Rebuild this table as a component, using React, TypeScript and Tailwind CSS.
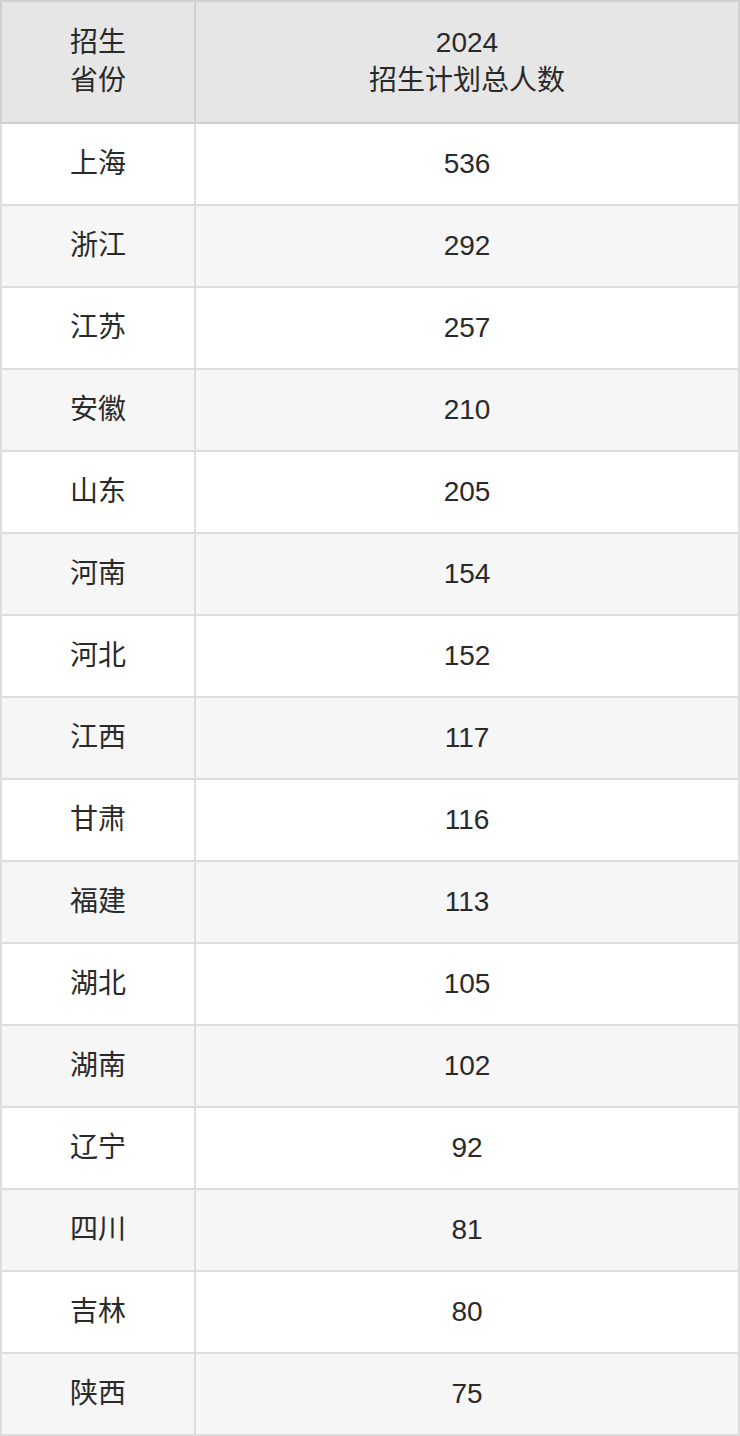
import React from "react";

const rows: [string, string][] = [
  ["上海", "536"],
  ["浙江", "292"],
  ["江苏", "257"],
  ["安徽", "210"],
  ["山东", "205"],
  ["河南", "154"],
  ["河北", "152"],
  ["江西", "117"],
  ["甘肃", "116"],
  ["福建", "113"],
  ["湖北", "105"],
  ["湖南", "102"],
  ["辽宁", "92"],
  ["四川", "81"],
  ["吉林", "80"],
  ["陕西", "75"],
];

export default function App() {
  return (
    <div
      className="w-[740px] bg-white text-[#2a2a2a] text-[28px] leading-[38px]"
      style={{ fontFamily: '"Liberation Sans", "Noto Sans CJK SC", sans-serif' }}
    >
      <div className="grid grid-cols-[196px_1fr]">
        <div className="h-[124px] flex flex-col items-center justify-center bg-[#e6e6e6] border-l-2 border-t-2 border-r-2 border-b-2 border-[#d0d0d0] box-border">
          <span>招生</span>
          <span>省份</span>
        </div>
        <div className="h-[124px] flex flex-col items-center justify-center bg-[#e6e6e6] border-t-2 border-r-2 border-b-2 border-[#d0d0d0] box-border">
          <span>2024</span>
          <span>招生计划总人数</span>
        </div>
        {rows.map(([p, n], i) => {
          const bg = i % 2 === 0 ? "bg-white" : "bg-[#f6f6f6]";
          return (
            <React.Fragment key={p}>
              <div
                className={`h-[82px] flex items-center justify-center border-l-2 border-r-2 border-b-2 border-[#dddddd] box-border ${bg}`}
              >
                {p}
              </div>
              <div
                className={`h-[82px] flex items-center justify-center border-r-2 border-b-2 border-[#dddddd] box-border ${bg}`}
              >
                {n}
              </div>
            </React.Fragment>
          );
        })}
      </div>
    </div>
  );
}
